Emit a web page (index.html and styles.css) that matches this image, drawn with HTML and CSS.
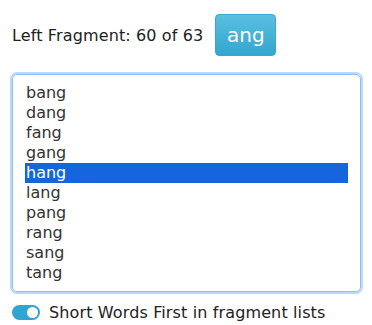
FILE: index.html
```html
<!DOCTYPE html>
<html lang="en">
<head>
    <meta charset="UTF-8">
    <title>Left Fragment</title>
    <link rel="stylesheet" href="styles.css">
</head>
<body>
    <main class="painel">
        <div class="cabecalho">
            <span class="rotulo">Left Fragment: 60 of 63</span>
            <button class="botaoFragmento">ang</button>
        </div>

        <ul class="lista">
            <li>bang</li>
            <li>dang</li>
            <li>fang</li>
            <li>gang</li>
            <li class="selecionado">hang</li>
            <li>lang</li>
            <li>pang</li>
            <li>rang</li>
            <li>sang</li>
            <li>tang</li>
        </ul>

        <label class="opcao">
            <span class="chave"><span class="bolinha"></span></span>
            <span>Short Words First in fragment lists</span>
        </label>
    </main>
</body>
</html>
```
FILE: styles.css
```css
* {
    margin: 0;
    padding: 0;
    box-sizing: border-box;
}

body {
    background-color: #ffffff;
    font-family: "DejaVu Sans", Verdana, sans-serif;
    font-size: 16px;
    letter-spacing: 0.13px;
    color: #222;
}

.painel {
    padding: 14px 11px 0 12px;
}

.cabecalho {
    display: flex;
    align-items: center;
    gap: 12px;
}

.botaoFragmento {
    width: 61px;
    height: 42px;
    border: 1px solid #3aa7cf;
    border-radius: 4px;
    background: linear-gradient(#5bbfe0, #33a6d0);
    color: #fff;
    font-family: "DejaVu Sans", Verdana, sans-serif;
    font-size: 20px;
}

.lista {
    list-style: none;
    margin-top: 18px;
    border: 1px solid #8fbef2;
    border-radius: 5px;
    box-shadow: 0 0 0 2px #bcd9fb;
    padding: 8px 12px;
    color: #333;
    letter-spacing: 0;
}

.lista li {
    height: 20px;
    line-height: 20px;
    padding-left: 1px;
}

.lista .selecionado {
    background-color: #1566dc;
    color: #fff;
}

.opcao {
    display: flex;
    align-items: center;
    gap: 9px;
    margin-top: 11px;
}

.chave {
    width: 28px;
    height: 15px;
    border-radius: 8px;
    background-color: #2fa6d2;
    position: relative;
}

.bolinha {
    position: absolute;
    top: 2px;
    right: 2px;
    width: 11px;
    height: 11px;
    border-radius: 50%;
    background-color: #fff;
}
```
